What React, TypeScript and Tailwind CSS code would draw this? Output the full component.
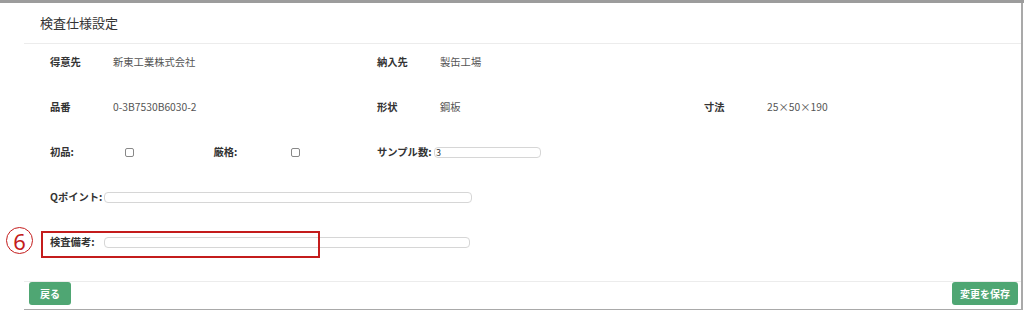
const font = "font-['Noto_Sans_CJK_JP','Noto_Sans',sans-serif]"

function Field({ label, value, width = "w-[327px]" }: { label: string; value: string; width?: string }) {
  return (
    <div className={`${width} flex items-center h-[14px]`}>
      <span className="w-[63px] font-bold text-[#333]">{label}</span>
      <span className="text-[#555]">{value}</span>
    </div>
  )
}

function Check({ label, labelWidth }: { label: string; labelWidth: string }) {
  return (
    <div className="w-[163.5px] flex items-center h-[14px]">
      <span className={`${labelWidth} font-bold text-[#333]`}>{label}</span>
      <span className="w-[9px] h-[9px] border border-[#888] rounded-[2px] bg-white" />
    </div>
  )
}

function TextBox({ width, value }: { width: string; value?: string }) {
  return (
    <div
      className={`${width} h-[11px] border border-[#d6d6d6] rounded-[4px] bg-white text-[9px] leading-[9px] pl-[1px] text-[#333]`}
    >
      {value}
    </div>
  )
}

export default function App() {
  return (
    <div className={`relative w-[1024px] h-[311px] bg-white overflow-hidden ${font} text-[10.3px] leading-[14px]`}>
      <div className="h-[3px] bg-[#9c9c9c]" />
      <div className="ml-[24px] w-[999px] flex flex-col border-r-2 border-b border-[#a9a9a9]">
        <div className="h-[40px] pl-[16px] flex items-center text-[13px] text-[#333]">検査仕様設定</div>
        <div className="border-t border-[#ececec]" />
        <div className="h-[237px] pl-[26px] pt-[11px]">
          <div className="h-[45px] flex">
            <Field label="得意先" value="新東工業株式会社" />
            <Field label="納入先" value="製缶工場" />
          </div>
          <div className="h-[45px] flex">
            <Field label="品番" value="0-3B7530B6030-2" />
            <Field label="形状" value="鋼板" />
            <Field label="寸法" value="25×50×190" width="w-[200px]" />
          </div>
          <div className="h-[45px] flex">
            <Check label="初品:" labelWidth="w-[75px]" />
            <Check label="厳格:" labelWidth="w-[77px]" />
            <div className="flex items-center h-[14px]">
              <span className="font-bold text-[#333] w-[57px]">サンプル数:</span>
              <TextBox width="w-[107px]" value="3" />
            </div>
          </div>
          <div className="h-[45px] flex">
            <div className="flex items-center h-[14px]">
              <span className="font-bold text-[#333] w-[54px]">Qポイント:</span>
              <TextBox width="w-[368px]" />
            </div>
          </div>
          <div className="h-[45px] flex">
            <div className="flex items-center h-[14px]">
              <span className="font-bold text-[#333] w-[54px]">検査備考:</span>
              <TextBox width="w-[366px]" />
            </div>
          </div>
        </div>
        <div className="border-t border-[#ececec]" />
        <div className="h-[27px] pl-[5px] pr-[3px] flex justify-between items-start">
          <button className="w-[42px] h-[23px] rounded-[3px] bg-[#4fa673] text-white font-bold text-[10px]">戻る</button>
          <button className="w-[66px] h-[23px] rounded-[3px] bg-[#4fa673] text-white font-bold text-[10px]">変更を保存</button>
        </div>
      </div>
      <div className="absolute left-[41px] top-[231px] w-[279px] h-[27px] border-2 border-[#c41c1c]" />
      <div className="absolute left-[6px] top-[227px] w-[27px] h-[27px] rounded-full border-[1.5px] border-[#c41c1c] flex items-center justify-center text-[22px] leading-none text-[#c41c1c] font-['Noto_Sans','Noto_Sans_CJK_JP',sans-serif]">
        6
      </div>
    </div>
  )
}
